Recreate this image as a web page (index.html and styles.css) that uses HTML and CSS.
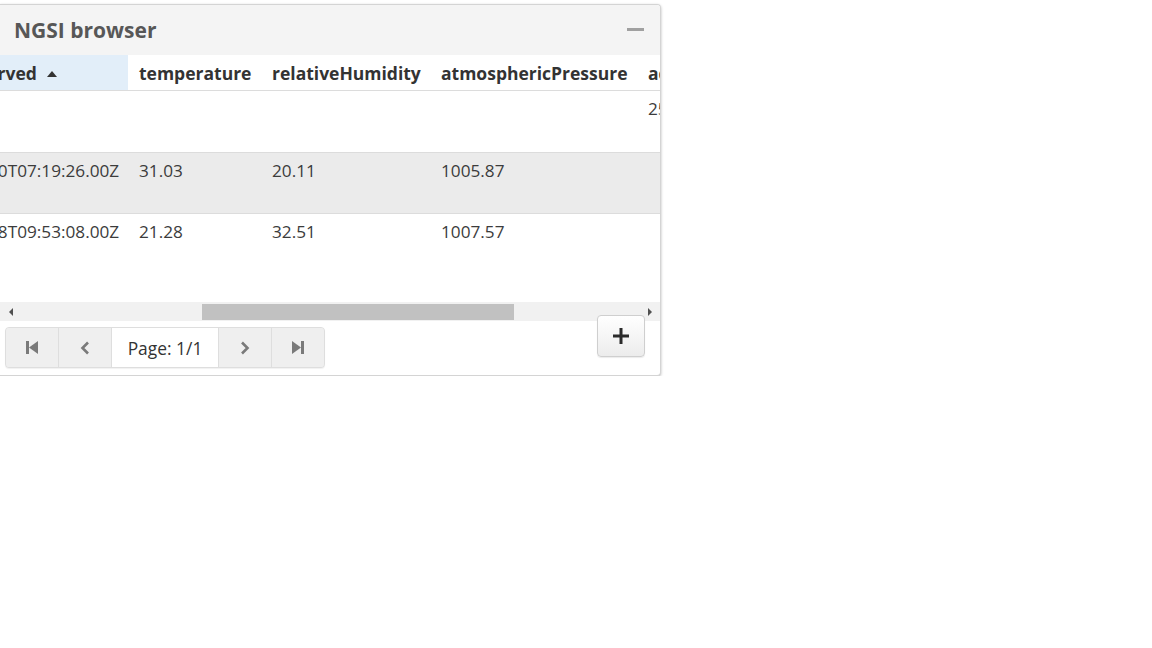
FILE: index.html
```html
<!DOCTYPE html>
<html lang="en">
<head>
  <meta charset="UTF-8" />
  <title>NGSI browser</title>
  <link rel="stylesheet" href="styles.css">
</head>
<body>

  <div class="panel">
    <div class="panel-head">
      <h1>NGSI browser</h1>
      <button class="minimize" title="Minimize"><span></span></button>
    </div>

    <div class="grid-view">
      <table class="grid">
        <colgroup>
          <col class="c-date"><col class="c-temp"><col class="c-hum"><col class="c-press"><col class="c-addr">
        </colgroup>
        <thead>
          <tr>
            <th class="sorted">dateObserved <span class="caret"></span></th>
            <th>temperature</th>
            <th>relativeHumidity</th>
            <th>atmosphericPressure</th>
            <th>address</th>
          </tr>
        </thead>
        <tbody>
          <tr>
            <td></td><td></td><td></td><td></td><td>25 Calle de Alcalá</td>
          </tr>
          <tr class="odd">
            <td>2016-11-30T07:19:26.00Z</td><td>31.03</td><td>20.11</td><td>1005.87</td><td></td>
          </tr>
          <tr>
            <td>2016-11-28T09:53:08.00Z</td><td>21.28</td><td>32.51</td><td>1007.57</td><td></td>
          </tr>
        </tbody>
      </table>
    </div>

    <div class="hscroll">
      <div class="arrow left"></div>
      <div class="track"><div class="thumb"></div></div>
      <div class="arrow right"></div>
    </div>

    <div class="panel-foot">
      <div class="pager">
        <button class="pbtn" title="First">
          <svg width="12" height="13" viewBox="0 0 12 13"><rect x="0" y="0" width="3" height="13" fill="#7a7a7a"/><path d="M12 0 L3 6.5 L12 13 Z" fill="#7a7a7a"/></svg>
        </button>
        <button class="pbtn" title="Previous">
          <svg width="10" height="14" viewBox="0 0 10 14"><path d="M8 1.5 L2.5 7 L8 12.5" fill="none" stroke="#7a7a7a" stroke-width="2.6"/></svg>
        </button>
        <div class="page-label">Page: 1/1</div>
        <button class="pbtn" title="Next">
          <svg width="10" height="14" viewBox="0 0 10 14"><path d="M2 1.5 L7.5 7 L2 12.5" fill="none" stroke="#7a7a7a" stroke-width="2.6"/></svg>
        </button>
        <button class="pbtn" title="Last">
          <svg width="12" height="13" viewBox="0 0 12 13"><path d="M0 0 L9 6.5 L0 13 Z" fill="#7a7a7a"/><rect x="9" y="0" width="3" height="13" fill="#7a7a7a"/></svg>
        </button>
      </div>
    </div>

    <button class="add-btn" title="Add">
      <svg width="16" height="16" viewBox="0 0 16 16"><rect x="6.5" y="0" width="3" height="16" fill="#2b2b2b"/><rect x="0" y="6.5" width="16" height="3" fill="#2b2b2b"/></svg>
    </button>
  </div>

</body>
</html>
```

FILE: styles.css
```css
body {
  margin: 0;
  font-family: 'Open Sans', 'DejaVu Sans', sans-serif;
  background: #fff;
  color: #333;
}
.panel {
  position: relative;
  width: 660px;
  height: 370px;
  margin-top: 4px;
  border: 1px solid #d4d4d4;
  border-left: none;
  border-radius: 0 4px 4px 0;
  box-shadow: 0 1px 3px rgba(0, 0, 0, 0.28);
  background: #fff;
  display: flex;
  flex-direction: column;
  overflow: hidden;
}
.panel-head {
  height: 50px;
  flex: none;
  display: flex;
  align-items: center;
  justify-content: space-between;
  padding: 0 15px 0 14px;
  background: #f4f4f4;
}
.panel-head h1 {
  margin: 0;
  font-size: 21px;
  font-weight: 700;
  color: #575757;
}
.minimize {
  border: none;
  background: none;
  padding: 0;
  width: 18px;
  height: 14px;
  display: flex;
  align-items: center;
  margin-bottom: 2px;
}
.minimize span {
  display: block;
  width: 17px;
  height: 3px;
  background: #a0a0a0;
}

.grid-view {
  height: 247px;
  flex: none;
  overflow: hidden;
}
.grid {
  border-collapse: collapse;
  table-layout: fixed;
  width: 954px;
  margin-left: -93px;
  font-size: 17.2px;
}
.c-date  { width: 221px; }
.c-temp  { width: 133px; }
.c-hum   { width: 169px; }
.c-press { width: 207px; }
.c-addr  { width: 224px; }
.grid th {
  height: 35px;
  padding: 0 11px;
  text-align: left;
  font-size: 17.5px;
  font-weight: 700;
  color: #333;
  white-space: nowrap;
  border-bottom: 1px solid #dcdcdc;
}
.grid th.sorted {
  background: #e2eef9;
  padding-left: 7px;
}
.caret {
  display: inline-block;
  margin-left: 6px;
  vertical-align: 3px;
  border-left: 5px solid transparent;
  border-right: 5px solid transparent;
  border-bottom: 6px solid #333;
}
.grid td {
  height: 61px;
  padding: 7px 11px 0 11px;
  line-height: 22px;
  vertical-align: top;
  color: #3c3c3c;
  white-space: nowrap;
  overflow: hidden;
  border-bottom: 1px solid #dcdcdc;
  box-sizing: border-box;
}
.grid tbody tr:first-child td { height: 62px; }
.grid tr.odd td { background: #ebebeb; }
.grid tbody tr:last-child td { border-bottom: none; }

.hscroll {
  height: 19px;
  flex: none;
  display: flex;
  background: #f1f1f1;
}
.arrow {
  width: 17px;
  flex: none;
  display: flex;
  align-items: center;
  justify-content: center;
}
.arrow.left::before {
  content: "";
  border-top: 4px solid transparent;
  border-bottom: 4px solid transparent;
  border-right: 4px solid #505050;
  margin-left: 4px;
}
.arrow.right::before {
  content: "";
  border-top: 4px solid transparent;
  border-bottom: 4px solid transparent;
  border-left: 4px solid #505050;
  margin-right: 4px;
}
.track {
  flex: 1;
  padding: 2px 0 1px 0;
}
.thumb {
  margin-left: 185px;
  width: 312px;
  height: 16px;
  background: #c1c1c1;
}

.panel-foot {
  flex: 1;
  padding: 6px 5px;
}
.pager {
  display: inline-flex;
  height: 41px;
  border: 1px solid #dedede;
  border-radius: 4px;
  background: #efefef;
  box-shadow: 0 1px 1px rgba(0, 0, 0, 0.06);
  box-sizing: border-box;
  overflow: hidden;
}
.pbtn {
  width: 53px;
  border: none;
  border-right: 1px solid #dedede;
  background: #efefef;
  padding: 0;
  display: flex;
  align-items: center;
  justify-content: center;
}
.pbtn:last-child { border-right: none; width: 52px; }
.page-label {
  width: 106px;
  border-right: 1px solid #dedede;
  background: #fff;
  display: flex;
  align-items: center;
  justify-content: center;
  font-size: 17.4px;
  color: #333;
}

.add-btn {
  position: absolute;
  left: 597px;
  top: 310px;
  width: 48px;
  height: 42px;
  border: 1px solid #cfcfcf;
  border-radius: 4px;
  background: linear-gradient(#ffffff, #ececec);
  box-shadow: 0 1px 1px rgba(0, 0, 0, 0.08);
  display: flex;
  align-items: center;
  justify-content: center;
  padding: 0;
}
```
